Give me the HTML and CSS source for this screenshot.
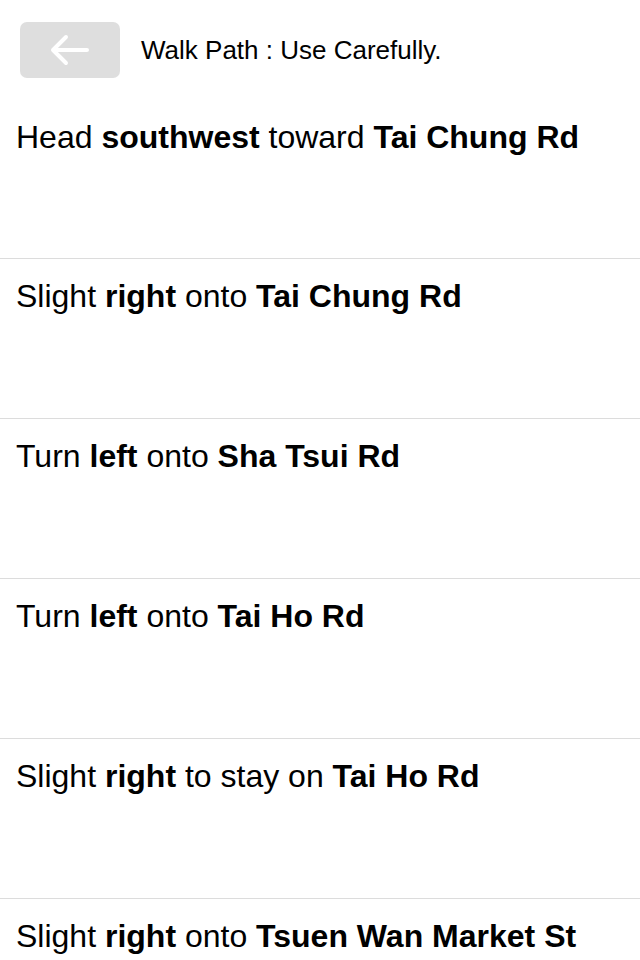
FILE: index.html
```html
<!DOCTYPE html>
<html>
<head>
	<meta charset="utf-8">
	<meta name="viewport" content="width=device-width, initial-scale=1">
	<title>Walk Path</title>
	<link rel="stylesheet" href="styles.css">
</head>
<body>
	<div class="header">
		<button class="back" aria-label="Back">
			<svg width="40" height="34" viewBox="0 0 40 34">
				<path d="M37 17 H3 M16 4 L3 17 L16 30" fill="none" stroke="white" stroke-width="4" stroke-linecap="round" stroke-linejoin="round"/>
			</svg>
		</button>
		<h1 class="title">Walk Path : Use Carefully.</h1>
	</div>
	<div class="steps">
		<div class="step">Head <b>southwest</b> toward <b>Tai Chung Rd</b></div>
		<div class="step">Slight <b>right</b> onto <b>Tai Chung Rd</b></div>
		<div class="step">Turn <b>left</b> onto <b>Sha Tsui Rd</b></div>
		<div class="step">Turn <b>left</b> onto <b>Tai Ho Rd</b></div>
		<div class="step">Slight <b>right</b> to stay on <b>Tai Ho Rd</b></div>
		<div class="step">Slight <b>right</b> onto <b>Tsuen Wan Market St</b></div>
	</div>
</body>
</html>
```

FILE: styles.css
```css
body {
	margin: 0;
	padding: 0;
	background-color: white;
	font-family: "Liberation Sans", Arial, sans-serif;
	color: black;
	overflow: hidden;
}

.header {
	display: flex;
	align-items: center;
	height: 100px;
	padding-left: 20px;
	box-sizing: border-box;
}
.back {
	width: 100px;
	height: 56px;
	margin: 0;
	padding: 0;
	border: none;
	border-radius: 7px;
	background-color: #dedede;
	display: flex;
	align-items: center;
	justify-content: center;
}
.title {
	margin: 0 0 0 21px;
	font-size: 26px;
	font-weight: normal;
}

.step {
	height: 160px;
	box-sizing: border-box;
	padding: 19px 16px 0 16px;
	font-size: 32px;
	line-height: 36px;
	white-space: nowrap;
	border-bottom: 1px solid #dcdcdc;
}
.step:first-child {
	height: 159px;
}
```
